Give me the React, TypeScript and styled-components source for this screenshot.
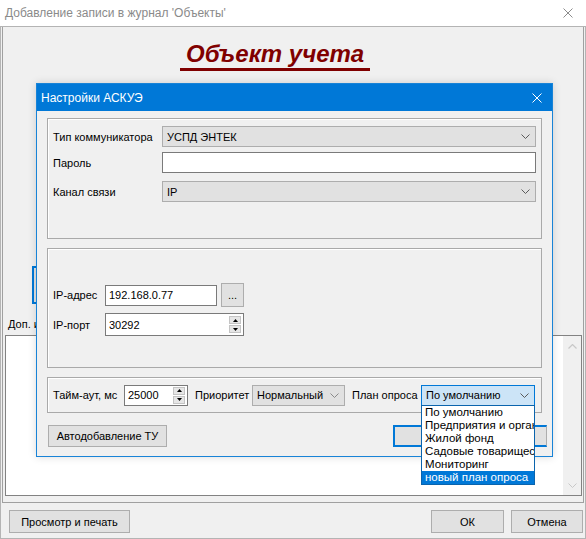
import React from 'react';
import styled, { createGlobalStyle } from 'styled-components';

const GlobalStyle = createGlobalStyle`
  html, body { margin: 0; padding: 0; background: #f0f0f0; }
  body { font-family: "Liberation Sans", Arial, sans-serif; font-size: 11px; color: #000; }
  * { box-sizing: border-box; }
`;

const Window = styled.div`
  position: relative;
  width: 586px;
  height: 539px;
  background: #f0f0f0;
  display: flex;
  flex-direction: column;
  overflow: hidden;
`;

const TitleBar = styled.div`
  height: 26px;
  flex: none;
  background: #fff;
  display: flex;
  align-items: center;
  justify-content: space-between;
  padding: 0 13px 0 5px;
  font-size: 12px;
  color: #8a8a8a;
`;

const Body = styled.div`
  flex: 1;
  display: flex;
  flex-direction: column;
  border: 1px solid #b4b4b4;
  padding: 0 1px;
`;

const MainPanel = styled.div`
  height: 476px;
  flex: none;
  display: flex;
  flex-direction: column;
  border: 1px solid #a0a0a0;
  border-top: none;
`;

const HeaderRow = styled.div`
  padding: 13px 0 0 177px;
`;

const HeaderTitle = styled.span`
  display: inline-block;
  font-family: "Liberation Sans", Arial, sans-serif;
  font-size: 24px;
  font-weight: bold;
  font-style: italic;
  line-height: 28px;
  color: #800000;
  padding: 0 6px;
  border-bottom: 3px solid #800000;
`;

const FocusButton = styled.div`
  margin: 195px 0 0 29px;
  width: 120px;
  height: 38px;
  background: #e1e1e1;
  border: 2px solid #0078d7;
`;

const FieldCaption = styled.div`
  margin: 14px 0 0 5px;
  height: 12px;
  line-height: 12px;
  white-space: nowrap;
`;

const Memo = styled.div`
  flex: 1;
  margin: 5px 1px 6px 2px;
  background: #fff;
  border: 1px solid #828282;
  display: flex;
  justify-content: flex-end;
`;

const ScrollBar = styled.div`
  width: 18px;
  background: #f0f0f0;
  display: flex;
  flex-direction: column;
  justify-content: space-between;
  align-items: center;
  padding: 8px 0 7px;
`;

const BottomRow = styled.div`
  display: flex;
  align-items: flex-start;
  padding: 7px 0 0 7px;
`;

const Button = styled.div<{ $w: number; $h?: number; $ml?: number }>`
  width: ${p => p.$w}px;
  height: ${p => p.$h ?? 23}px;
  margin-left: ${p => p.$ml ?? 0}px;
  flex: none;
  display: flex;
  align-items: center;
  justify-content: center;
  background: #e1e1e1;
  border: 1px solid #adadad;
  font-size: 11px;
  white-space: nowrap;
`;

/* ---------- dialog ---------- */

const Dialog = styled.div`
  position: absolute;
  left: 36px;
  top: 83px;
  width: 517px;
  height: 374px;
  border: 1px solid #1883d7;
  background: #f0f0f0;
  display: flex;
  flex-direction: column;
  box-shadow: 0 0 8px rgba(0, 0, 0, 0.15);
`;

const DialogTitle = styled.div`
  height: 27px;
  flex: none;
  background: #0078d7;
  color: #fff;
  font-size: 12px;
  display: flex;
  align-items: center;
  justify-content: space-between;
  padding: 0 10px 0 4px;
`;

const DialogContent = styled.div`
  flex: 1;
  display: flex;
  flex-direction: column;
  padding: 7px 10px 0 10px;
`;

const Group = styled.div<{ $h: number; $mt?: number }>`
  height: ${p => p.$h}px;
  margin-top: ${p => p.$mt ?? 0}px;
  flex: none;
  border: 1px solid #a9a9a9;
  box-shadow: inset 1px 1px 0 #fff;
`;

const GridGroup = styled(Group)`
  padding: 7px 5px 0 5px;
`;

const FormRow = styled.div<{ $cols: string; $mt?: number; $h?: number }>`
  display: grid;
  grid-template-columns: ${p => p.$cols};
  align-items: center;
  height: ${p => p.$h ?? 21}px;
  margin-top: ${p => p.$mt ?? 0}px;
`;

const Label = styled.span<{ $w?: number; $ml?: number }>`
  ${p => (p.$w ? `width: ${p.$w}px; flex: none;` : '')}
  margin-left: ${p => p.$ml ?? 0}px;
  white-space: nowrap;
  font-size: 11px;
`;

const Combo = styled.div<{ $active?: boolean; $w?: number }>`
  position: relative;
  height: 21px;
  ${p => (p.$w ? `width: ${p.$w}px; flex: none;` : '')}
  display: flex;
  align-items: center;
  justify-content: space-between;
  padding: 0 5px 0 4px;
  background: ${p => (p.$active ? '#cce4f7' : '#e1e1e1')};
  border: 1px solid ${p => (p.$active ? '#0078d7' : '#adadad')};
  white-space: nowrap;
`;

const TextBox = styled.div<{ $w?: number; $h?: number }>`
  height: ${p => p.$h ?? 21}px;
  ${p => (p.$w ? `width: ${p.$w}px; flex: none;` : '')}
  background: #fff;
  border: 1px solid #7a7a7a;
  display: flex;
  align-items: center;
  padding: 0 2px 0 3px;
  white-space: nowrap;
`;

const SpinText = styled.span`
  flex: 1;
`;

const SpinButtons = styled.div`
  width: 12px;
  display: flex;
  flex-direction: column;
  gap: 1px;
`;

const SpinBtn = styled.div`
  height: 8px;
  background: #e6e6e6;
  border: 1px solid #c4c4c4;
  display: flex;
  align-items: center;
  justify-content: center;
`;

const IpRows = styled.div`
  padding: 34px 0 0 5px;
`;

const SmallButton = styled(Button)`
  align-items: flex-end;
  padding-bottom: 5px;
`;

const InlineRow = styled.div`
  display: flex;
  align-items: center;
  height: 34px;
  padding-left: 5px;
`;

const DialogButtons = styled.div`
  display: flex;
  justify-content: space-between;
  margin: 12px -5px 0 1px;
`;

const DefaultButton = styled.div`
  width: 154px;
  height: 22px;
  background: #e1e1e1;
  border: 2px solid #0078d7;
  border-right: 1px solid #adadad;
`;

const DropList = styled.div`
  position: absolute;
  left: -1px;
  top: 100%;
  width: calc(100% + 2px);
  background: #fff;
  border: 1px solid #0a64ad;
  overflow: hidden;
  z-index: 5;
`;

const DropItem = styled.div<{ $selected?: boolean }>`
  height: 13px;
  line-height: 13px;
  padding-left: 3px;
  font-size: 11.5px;
  white-space: nowrap;
  overflow: hidden;
  background: ${p => (p.$selected ? '#0078d7' : '#fff')};
  color: ${p => (p.$selected ? '#fff' : '#000')};
`;

const Chevron = ({ color = '#5a5a5a' }: { color?: string }) => (
  <svg width="9" height="5" viewBox="0 0 9 5" style={{ flex: 'none' }}>
    <path d="M0.5 0.5 L4.5 4.5 L8.5 0.5" stroke={color} fill="none" strokeWidth="1" />
  </svg>
);

const ChevronUp = ({ color }: { color: string }) => (
  <svg width="9" height="5" viewBox="0 0 9 5">
    <path d="M0.5 4.5 L4.5 0.5 L8.5 4.5" stroke={color} fill="none" strokeWidth="1.2" />
  </svg>
);

const Tri = ({ up }: { up?: boolean }) => (
  <svg width="5" height="3" viewBox="0 0 5 3">
    <path d={up ? 'M0 3 L2.5 0 L5 3 Z' : 'M0 0 L2.5 3 L5 0 Z'} fill="#000" />
  </svg>
);

const CloseX = ({ color, size = 10 }: { color: string; size?: number }) => (
  <svg width={size} height={size} viewBox="0 0 10 10">
    <path d="M0.5 0.5 L9.5 9.5 M9.5 0.5 L0.5 9.5" stroke={color} strokeWidth="1" />
  </svg>
);

const Spin = ({ value, w, h }: { value: string; w: number; h?: number }) => (
  <TextBox $w={w} $h={h}>
    <SpinText>{value}</SpinText>
    <SpinButtons>
      <SpinBtn>
        <Tri up />
      </SpinBtn>
      <SpinBtn>
        <Tri />
      </SpinBtn>
    </SpinButtons>
  </TextBox>
);

const plans = [
  'По умолчанию',
  'Предприятия и организации',
  'Жилой фонд',
  'Садовые товарищества',
  'Мониторинг',
  'новый план опроса',
];

export default function App() {
  return (
    <>
      <GlobalStyle />
      <Window>
        <TitleBar>
          <span>Добавление записи в журнал 'Объекты'</span>
          <CloseX color="#8c8c8c" />
        </TitleBar>
        <Body>
          <MainPanel>
            <HeaderRow>
              <HeaderTitle>Объект учета</HeaderTitle>
            </HeaderRow>
            <FocusButton />
            <FieldCaption>Доп. информация</FieldCaption>
            <Memo>
              <ScrollBar>
                <ChevronUp color="#c8c8c8" />
                <Chevron color="#c8c8c8" />
              </ScrollBar>
            </Memo>
          </MainPanel>
          <BottomRow>
            <Button $w={121}>Просмотр и печать</Button>
            <Button $w={73} $ml={301}>ОК</Button>
            <Button $w={72} $ml={7}>Отмена</Button>
          </BottomRow>
        </Body>

        <Dialog>
          <DialogTitle>
            <span>Настройки АСКУЭ</span>
            <CloseX color="#ffffff" />
          </DialogTitle>
          <DialogContent>
            <GridGroup $h={121}>
              <FormRow $cols="109px 1fr">
                <Label>Тип коммуникатора</Label>
                <Combo>
                  <span>УСПД ЭНТЕК</span>
                  <Chevron />
                </Combo>
              </FormRow>
              <FormRow $cols="109px 1fr" $mt={5}>
                <Label>Пароль</Label>
                <TextBox />
              </FormRow>
              <FormRow $cols="109px 1fr" $mt={8}>
                <Label>Канал связи</Label>
                <Combo>
                  <span>IP</span>
                  <Chevron />
                </Combo>
              </FormRow>
            </GridGroup>

            <Group $h={120} $mt={9}>
              <IpRows>
                <FormRow $cols="52px 112px 4px 23px" $h={24}>
                  <Label>IP-адрес</Label>
                  <TextBox>192.168.0.77</TextBox>
                  <span />
                  <SmallButton $w={23} $h={24}>...</SmallButton>
                </FormRow>
                <FormRow $cols="52px 139px" $h={23} $mt={6}>
                  <Label>IP-порт</Label>
                  <Spin value="30292" w={139} h={23} />
                </FormRow>
              </IpRows>
            </Group>

            <Group $h={36} $mt={9}>
              <InlineRow>
                <Label $w={71}>Тайм-аут, мс</Label>
                <Spin value="25000" w={64} />
                <Label $w={57} $ml={7}>Приоритет</Label>
                <Combo $w={93}>
                  <span>Нормальный</span>
                  <Chevron color="#8a8a8a" />
                </Combo>
                <Label $w={69} $ml={7}>План опроса</Label>
                <Combo $w={114} $active>
                  <span>По умолчанию</span>
                  <Chevron />
                  <DropList>
                    {plans.map((p, i) => (
                      <DropItem key={p} $selected={i === plans.length - 1}>
                        {p}
                      </DropItem>
                    ))}
                  </DropList>
                </Combo>
              </InlineRow>
            </Group>

            <DialogButtons>
              <Button $w={119} $h={22}>Автодобавление ТУ</Button>
              <DefaultButton />
            </DialogButtons>
          </DialogContent>
        </Dialog>
      </Window>
    </>
  );
}
